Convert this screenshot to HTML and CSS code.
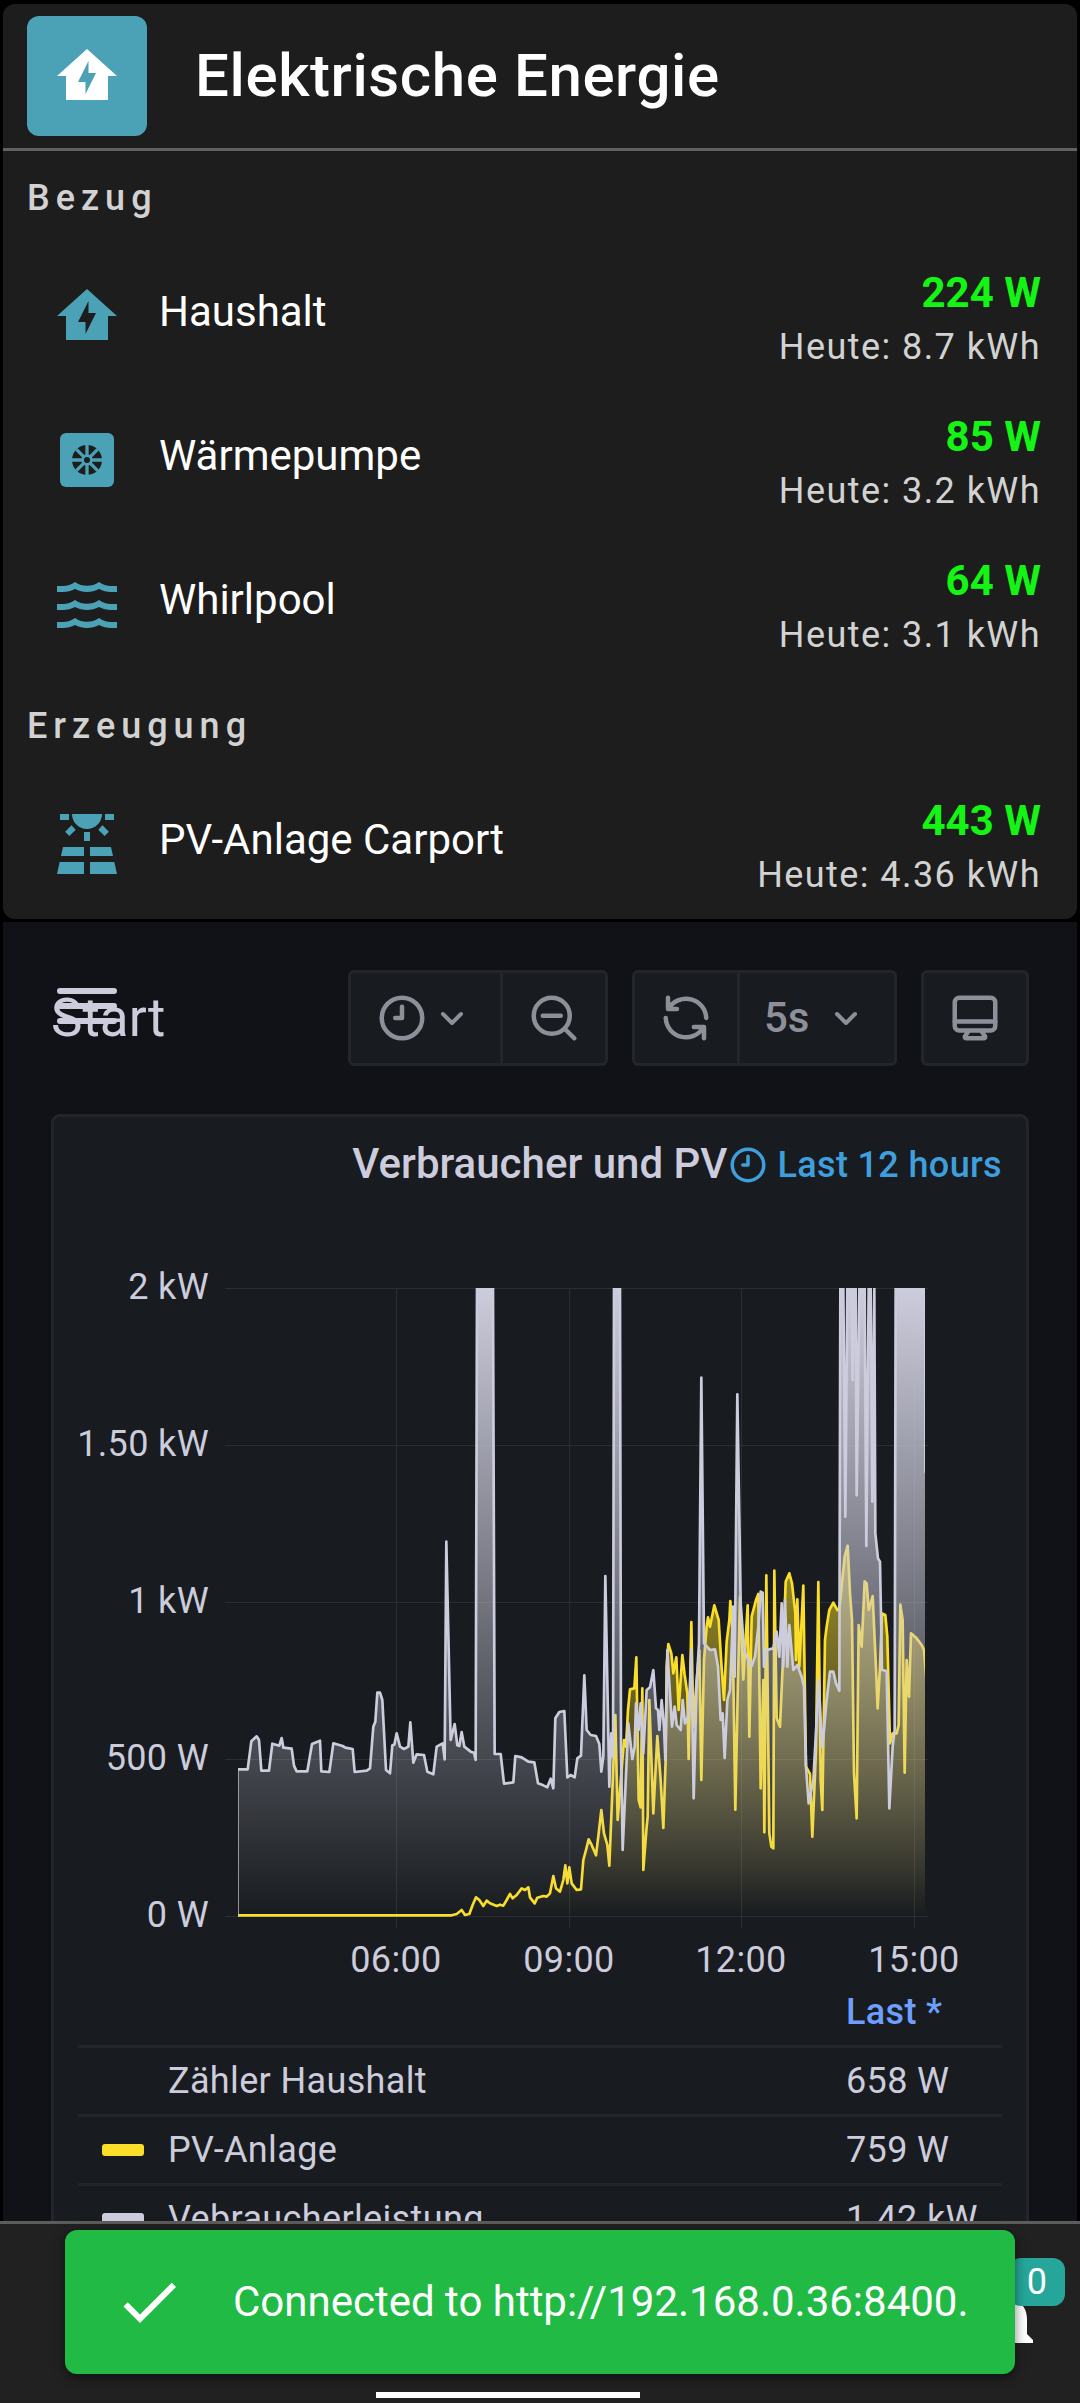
FILE: index.html
```html
<!DOCTYPE html>
<html lang="de">
<head>
<meta charset="utf-8">
<meta name="viewport" content="width=device-width, initial-scale=1">
<title>Elektrische Energie</title>
<link rel="stylesheet" href="styles.css">
</head>
<body>
<main class="content">
  <section class="card">
    <header class="card-header">
      <span class="card-tile">
        <svg class="icon" viewBox="0 0 24 24" aria-hidden="true"><path d="M12 3L2 12H5V20H19V12H22L12 3M11.5 18V14H9L12.5 7V11H15L11.5 18Z"/></svg>
      </span>
      <h1 class="card-title">Elektrische Energie</h1>
    </header>

    <div class="group">
      <h2 class="group-title">Bezug</h2>
      <ul class="rows">
        <li class="row">
          <svg class="icon row-icon" viewBox="0 0 24 24" aria-hidden="true"><path d="M12 3L2 12H5V20H19V12H22L12 3M11.5 18V14H9L12.5 7V11H15L11.5 18Z"/></svg>
          <span class="row-name">Haushalt</span>
          <span class="row-values"><strong class="row-now">224 W</strong><span class="row-today">Heute: 8.7 kWh</span></span>
        </li>
        <li class="row">
          <svg class="icon row-icon" viewBox="0 0 24 24" aria-hidden="true">
            <rect x="3" y="3" width="18" height="18" rx="2"/>
            <circle class="fan-dark" cx="12" cy="12" r="5"/>
            <path class="fan-spokes" d="M12 7v10M7 12h10M8.46 8.46l7.08 7.08M15.54 8.46l-7.08 7.08"/>
            <circle cx="12" cy="12" r="1.9"/>
            <circle class="fan-dark" cx="12" cy="12" r="1"/>
          </svg>
          <span class="row-name">Wärmepumpe</span>
          <span class="row-values"><strong class="row-now">85 W</strong><span class="row-today">Heute: 3.2 kWh</span></span>
        </li>
        <li class="row">
          <svg class="icon row-icon" viewBox="0 0 24 24" aria-hidden="true"><path d="M20,12H22V14H20C18.62,14 17.26,13.65 16,13C13.5,14.3 10.5,14.3 8,13C6.74,13.65 5.37,14 4,14H2V12H4C5.39,12 6.78,11.53 8,10.67C10.44,12.38 13.56,12.38 16,10.67C17.22,11.53 18.61,12 20,12M20,6H22V8H20C18.62,8 17.26,7.65 16,7C13.5,8.3 10.5,8.3 8,7C6.74,7.65 5.37,8 4,8H2V6H4C5.39,6 6.78,5.53 8,4.67C10.44,6.38 13.56,6.38 16,4.67C17.22,5.53 18.61,6 20,6M20,18H22V20H20C18.62,20 17.26,19.65 16,19C13.5,20.3 10.5,20.3 8,19C6.74,19.65 5.37,20 4,20H2V18H4C5.39,18 6.78,17.53 8,16.67C10.44,18.38 13.56,18.38 16,16.67C17.22,17.53 18.61,18 20,18Z"/></svg>
          <span class="row-name">Whirlpool</span>
          <span class="row-values"><strong class="row-now">64 W</strong><span class="row-today">Heute: 3.1 kWh</span></span>
        </li>
      </ul>
    </div>

    <div class="group">
      <h2 class="group-title">Erzeugung</h2>
      <ul class="rows">
        <li class="row">
          <svg class="icon row-icon" viewBox="0 0 24 24" aria-hidden="true"><path d="M3.33 16H11V13H4L3.33 16M13 16H20.67L20 13H13V16M21.11 18H13V22H22L21.11 18M2 22H11V18H2.89L2 22M11 8H13V11H11V8M15.76 7.21L17.18 5.79L19.3 7.91L17.89 9.33L15.76 7.21M4.71 7.91L6.83 5.79L8.24 7.21L6.12 9.33L4.71 7.91M3 2H6V4H3V2M18 2H21V4H18V2M12 7C14.76 7 17 4.76 17 2H7C7 4.76 9.24 7 12 7Z"/></svg>
          <span class="row-name">PV-Anlage Carport</span>
          <span class="row-values"><strong class="row-now">443 W</strong><span class="row-today">Heute: 4.36 kWh</span></span>
        </li>
      </ul>
    </div>
  </section>

  <section class="dashboard">
    <div class="toolbar">
      <div class="toolbar-title">
        <h2 class="dashboard-name">Start</h2>
        <button class="menu-button" type="button" aria-label="Menü">
          <svg viewBox="0 0 60 36" aria-hidden="true"><path d="M3 3h54M3 18h54M3 33h54"/></svg>
        </button>
      </div>
      <div class="button-group">
        <button class="tool-button time-button" type="button" aria-label="Zeitraum">
          <svg class="tool-icon" viewBox="0 0 24 24" aria-hidden="true"><circle cx="12" cy="12" r="9"/><path d="M12 7v5H9"/></svg>
          <svg class="chevron" viewBox="0 0 30 54" aria-hidden="true"><path d="M6 23l9 9 9-9"/></svg>
        </button>
        <button class="tool-button" type="button" aria-label="Verkleinern">
          <svg class="tool-icon" viewBox="0 0 24 24" aria-hidden="true"><circle cx="11" cy="11" r="8"/><path d="M7 11h8M17 17l4 4"/></svg>
        </button>
      </div>
      <div class="button-group">
        <button class="tool-button" type="button" aria-label="Aktualisieren">
          <svg class="tool-icon" viewBox="0 0 24 24" aria-hidden="true"><path d="M4 3v5h4M4.4 7.6A9 9 0 0 1 21 12M20 21v-5h-4.500M19.600 16.400A9 9 0 0 1 3 12"/></svg>
        </button>
        <div class="interval">
          <select class="interval-select" aria-label="Intervall"><option>5s</option><option>10s</option><option>30s</option></select>
          <svg class="chevron" viewBox="0 0 30 54" aria-hidden="true"><path d="M6 23l9 9 9-9"/></svg>
        </div>
      </div>
      <div class="button-group">
        <button class="tool-button" type="button" aria-label="Ansicht">
          <svg class="tool-icon" viewBox="0 0 24 24" aria-hidden="true"><rect x="3" y="3" width="18" height="14.500" rx="2"/><path d="M3 13.500h18M9 18l-1.500 2.200q-.2 .8 .7 .8h7.600q.9 0 .7-.8L15 18"/></svg>
        </button>
      </div>
    </div>

    <article class="panel">
      <header class="panel-header">
        <h3 class="panel-title">Verbraucher und PV</h3>
        <a class="panel-range" href="#range">
          <svg class="range-icon" viewBox="0 0 24 24" aria-hidden="true"><circle cx="12" cy="12" r="9"/><path d="M12 7v5H9"/></svg>Last 12 hours
        </a>
      </header>

      <svg class="chart" viewBox="54 1213 972 770" role="img" aria-label="Verbraucher und PV">
        <defs>
          <linearGradient id="fill-load" gradientUnits="userSpaceOnUse" x1="0" y1="-935" x2="0" y2="949">
            <stop offset="0" stop-color="#ccccdc"/><stop offset="1" stop-color="#ccccdc" stop-opacity="0"/>
          </linearGradient>
          <linearGradient id="fill-pv" gradientUnits="userSpaceOnUse" x1="0" y1="-935" x2="0" y2="949">
            <stop offset="0" stop-color="#fade2a"/><stop offset="1" stop-color="#fade2a" stop-opacity="0"/>
          </linearGradient>
          <clipPath id="plot"><rect x="238" y="1288" width="687" height="629"/></clipPath>
        </defs>
        <path class="grid" d="M225 1288.500h703M225 1445.500h703M225 1602.500h703M225 1759.500h703M225 1916.500h703M396.500 1288v640M569.500 1288v640M741.500 1288v640M914.500 1288v640"/>
        <g clip-path="url(#plot)">
          <g class="series" transform="translate(200 1600) scale(.33333)">
            <path fill="url(#fill-pv)" stroke="#fade2a" d="M113 946L755 946 770 942 785 930 795 945 808 942 818 915 828 892 838 900 850 918 860 902 870 910 890 918 900 914 910 917 920 900 930 882 938 895 950 885 965 865 975 870 985 862 990 892 1004 910 1012 893 1030 888 1040 890 1050 880 1060 828 1068 865 1080 875 1090 840 1096 796 1102 850 1108 802 1115 850 1130 870 1143 868 1150 780 1158 750 1166 718 1175 735 1188 766 1196 700 1204 630 1212 700 1222 735 1228 797 1236 600 1246 345 1253 660 1272 420 1278 440 1284 330 1290 268 1303 265 1309 172 1316 600 1322 622 1327 265 1330 810 1340 680 1343 650 1348 300 1360 640 1372 408 1382 540 1390 684 1397 480 1400 200 1405 132 1414 160 1420 220 1429 172 1436 330 1447 165 1454 225 1462 280 1466 477 1474 66 1480 380 1490 240 1498 150 1504 540 1512 180 1520 80 1524 52 1530 80 1543 16 1556 60 1564 190 1572 300 1580 125 1588 60 1591 3 1598 100 1606 629 1614 240 1620 -10 1630 238 1643 16 1648 410 1655 50 1668 0 1675 -18 1682 565 1690 240 1693 697 1699 -74 1708 700 1714 740 1720 745 1723 -88 1730 355 1740 380 1748 200 1757 -55 1768 -80 1776 -50 1786 40 1788 180 1792 -2 1798 200 1810 -43 1818 500 1830 522 1837 710 1848 450 1855 -54 1862 540 1867 630 1875 120 1880 80 1888 30 1900 8 1912 30 1918 25 1921 0 1934 -130 1943 -163 1950 -20 1956 60 1962 520 1970 655 1976 75 1985 140 1994 -56 2000 -50 2006 30 2018 -12 2026 160 2033 325 2040 200 2046 40 2056 45 2062 110 2070 430 2078 400 2090 400 2096 375 2101 14 2108 60 2114 518 2120 180 2127 290 2133 100 2150 115 2165 135 2172 150 2179 235V960"/>
            <path fill="url(#fill-load)" stroke="#ccccdc" d="M112 960V508L143 508 154 424 170 409 177 420 184 512 207 512 217 431 238 437 245 414 250 443 275 446 282 497 290 514 322 514 336 432 360 422 364 514 388 516 400 430 428 438 436 443 458 447 464 516 500 512 510 505 520 380 526 365 532 278 540 278 547 300 558 510 570 520 577 436 583 434 590 400 600 440 612 447 625 440 631 367 640 488 650 463 672 465 682 515 700 523 710 440 728 430 734 478 739 -175 752 420 764 372 772 436 778 438 785 396 793 440 812 455 822 458 827 480 831 -935 879 -935 884 462 902 462 912 551 940 547 946 468 965 472 985 485 1003 487 1014 550 1030 556 1042 562 1052 536 1060 565 1066 355 1078 336 1093 333 1102 532 1112 525 1124 532 1132 475 1143 467 1153 226 1160 390 1172 405 1188 408 1198 432 1204 515 1210 470 1216 -72 1228 560 1234 400 1239 470 1242 -935 1260 -935 1263 440 1268 750 1285 370 1297 477 1304 440 1308 310 1316 390 1322 310 1330 460 1340 270 1350 262 1360 210 1368 325 1374 330 1378 390 1385 300 1392 380 1396 480 1402 150 1416 380 1424 320 1430 375 1442 390 1448 300 1455 370 1464 350 1470 260 1474 150 1481 595 1490 250 1497 130 1504 -667 1512 130 1530 150 1545 148 1554 200 1562 360 1568 340 1574 474 1582 300 1590 270 1600 20 1604 230 1612 -617 1622 10 1630 120 1636 160 1645 180 1655 198 1665 170 1675 80 1682 -25 1688 -22 1692 200 1700 150 1720 145 1730 95 1738 170 1745 10 1750 200 1755 0 1762 200 1768 75 1780 210 1792 195 1805 230 1812 260 1818 500 1826 610 1840 540 1850 360 1856 240 1866 440 1872 390 1880 300 1890 215 1900 215 1908 250 1918 272 1921 -935 1930 -935 1936 -250 1942 -935 1954 -935 1958 -660 1962 -935 1967 -935 1970 -314 1978 -935 1994 -935 1999 -162 2006 -935 2012 -935 2017 -295 2023 -935 2026 -200 2034 -125 2040 -115 2046 210 2060 213 2068 625 2078 440 2084 390 2087 -935 2176 -935 2176 -385 2180 -385V960"/>
          </g>
        </g>
        <g class="axis axis-y">
          <text x="209" y="1299">2 kW</text>
          <text x="209" y="1456">1.50 kW</text>
          <text x="209" y="1613">1 kW</text>
          <text x="209" y="1770">500 W</text>
          <text x="209" y="1927">0 W</text>
        </g>
        <g class="axis axis-x">
          <text x="396" y="1972">06:00</text>
          <text x="569" y="1972">09:00</text>
          <text x="741" y="1972">12:00</text>
          <text x="914" y="1972">15:00</text>
        </g>
      </svg>

      <table class="legend">
        <thead>
          <tr><th class="legend-key"></th><th></th><th class="legend-value" scope="col">Last *</th></tr>
        </thead>
        <tbody>
          <tr><td class="legend-key"><span class="swatch"></span></td><td>Zähler Haushalt</td><td>658 W</td></tr>
          <tr><td class="legend-key"><span class="swatch swatch-pv"></span></td><td>PV-Anlage</td><td>759 W</td></tr>
          <tr><td class="legend-key"><span class="swatch swatch-load"></span></td><td>Vebraucherleistung</td><td>1.42 kW</td></tr>
        </tbody>
      </table>
    </article>
  </section>
</main>

<footer class="bottom-bar">
  <button class="bell" type="button" aria-label="Benachrichtigungen">
    <svg class="icon" viewBox="0 0 24 24" aria-hidden="true"><path d="M12 22c1.100 0 2-.9 2-2h-4c0 1.100.89 2 2 2zm6-6v-5c0-3.070-1.640-5.640-4.500-6.320V4c0-.83-.67-1.500-1.500-1.500s-1.500.67-1.500 1.500v.68C7.630 5.360 6 7.920 6 11v5l-2 2v1h16v-1l-2-2z"/></svg>
    <span class="badge">0</span>
  </button>
  <div class="toast" role="status">
    <svg class="icon" viewBox="0 0 24 24" aria-hidden="true"><path d="M21,7L9,19L3.500,13.500L4.910,12.090L9,16.170L19.590,5.590L21,7Z"/></svg>
    <span>Connected to http://192.168.0.36:8400.</span>
  </div>
  <div class="home-indicator"></div>
</footer>
</body>
</html>
```
FILE: styles.css
```css
* { box-sizing: border-box; }

body {
  margin: 0;
  height: 100vh;
  display: flex;
  flex-direction: column;
  background: #000;
  color: #fff;
  font-family: Roboto, "Noto Sans", sans-serif;
  font-size: 42px;
  line-height: 48px;
}

h1, h2, h3, ul { margin: 0; padding: 0; }
h1, h2, h3 { font-weight: 500; }
ul { list-style: none; }
button, select { margin: 0; padding: 0; border: 0; background: none; color: inherit; font: inherit; }
svg { display: block; flex: none; }

.content {
  flex: 1;
  min-height: 0;
  overflow: hidden;
  padding: 4px 3px 0;
  display: flex;
  flex-direction: column;
  gap: 3px;
}

/* energy card */
.card { flex: none; background: #1d1d1d; border-radius: 12px; }
.card-header {
  display: flex;
  align-items: center;
  gap: 48px;
  padding: 12px 24px;
  border-bottom: 3px solid #616161;
}
.card-tile {
  display: grid;
  place-items: center;
  width: 120px;
  height: 120px;
  border-radius: 12px;
  background: #4ba2b6;
}
.card-title { font-size: 60px; line-height: 72px; letter-spacing: 0.01em; }
.icon { width: 72px; height: 72px; fill: currentColor; }

.group { padding-bottom: 3px; }
.group-title {
  padding: 26px 24px 25px;
  color: #d2d2d2;
  font-size: 36px;
  line-height: 42px;
  letter-spacing: 6px;
}
.row {
  display: flex;
  align-items: flex-start;
  gap: 36px;
  padding: 25px 36px 11px 48px;
}
.row-icon { margin-top: 11px; color: #4ba2b6; }
.row-name { flex: 1; margin-top: 19px; }
.row-values { display: flex; flex-direction: column; align-items: flex-end; }
.row-now { color: #14f514; font-weight: 700; }
.row-today { color: #d2d2d2; font-size: 36px; line-height: 60px; letter-spacing: 0.04em; }
.fan-dark { fill: #1d1d1d; }
.fan-spokes { stroke: currentColor; stroke-width: 1.1; }

/* dashboard */
.dashboard { flex: none; padding: 48px; background: #111217; color: #ccccdc; }
.toolbar { display: flex; align-items: center; gap: 24px; margin-bottom: 48px; }
.toolbar-title { position: relative; flex: 1; }
.dashboard-name { font-size: 53px; line-height: 66px; font-weight: 400; }
.menu-button { position: absolute; left: 6px; top: 3px; }
.menu-button svg { width: 60px; height: 36px; stroke: #ccccdc; stroke-width: 6; stroke-linecap: round; }

.button-group {
  display: flex;
  height: 96px;
  border: 3px solid #22252b;
  border-radius: 6px;
  background: #181b1f;
  color: #8e9099;
}
.button-group > * + * { border-left: 3px solid #22252b; }
.tool-button { display: flex; align-items: center; gap: 8px; padding: 0 24px; }
.time-button { padding-right: 33px; }
.tool-icon { width: 54px; height: 54px; }
.chevron { width: 30px; height: 54px; }
.tool-icon, .range-icon { fill: none; stroke: currentColor; stroke-width: 2; stroke-linecap: round; stroke-linejoin: round; }
.chevron { fill: none; stroke: currentColor; stroke-width: 4; stroke-linecap: round; stroke-linejoin: round; }
.interval { position: relative; display: flex; align-items: center; width: 157px; }
.interval-select { appearance: none; width: 100%; height: 100%; padding-left: 24px; font-weight: 500; }
.interval .chevron { position: absolute; right: 33px; pointer-events: none; }

.panel { border: 3px solid #22252b; border-radius: 9px; background: #181b1f; padding-bottom: 48px; }
.panel-header {
  display: grid;
  grid-template-columns: 1fr auto 1fr;
  padding: 23px 24px 25px;
}
.panel-title { grid-column: 2; font-size: 42px; }
.panel-range {
  display: flex;
  align-items: center;
  justify-content: flex-end;
  gap: 8px;
  padding-top: 2px;
  height: 48px;
  color: #3f9fdc;
  font-size: 36px;
  font-weight: 500;
  letter-spacing: 0.01em;
  text-decoration: none;
  white-space: nowrap;
}
.range-icon { width: 42px; height: 42px; }

.chart { width: 100%; height: auto; }
.grid { fill: none; stroke: #2b2e32; stroke-width: 1; }
.series { stroke-width: 8; stroke-linejoin: round; }
.axis { fill: #ccccdc; font-size: 36px; letter-spacing: 0.01em; }
.axis-y { text-anchor: end; }
.axis-x { text-anchor: middle; }

.legend {
  width: calc(100% - 48px);
  margin: 0 24px;
  border-spacing: 0;
  font-size: 36px;
  line-height: 42px;
  letter-spacing: 0.01em;
}
.legend th { padding: 8px 0 12px; color: #6e9fff; font-weight: 500; text-align: left; }
.legend td { padding: 12px 0; border-top: 3px solid #22252b; }
.legend .legend-key { width: 90px; padding-left: 24px; vertical-align: middle; }
.legend-value { width: 156px; }
.swatch { display: block; width: 42px; height: 12px; border-radius: 3px; }
.swatch-pv { background: #fade2a; }
.swatch-load { background: #ccccdc; }

/* bottom bar */
.bottom-bar {
  position: relative;
  flex: none;
  display: flex;
  justify-content: flex-end;
  height: 182px;
  padding: 62px 35px 0;
  border-top: 3px solid #5c5c5c;
  background: #212121;
}
.bell { position: relative; height: 72px; }
.badge {
  position: absolute;
  right: -20px;
  top: -28px;
  padding: 0 18px;
  border-radius: 12px;
  background: #26a69a;
  font-size: 36px;
  line-height: 48px;
}
.toast {
  position: absolute;
  left: 65px;
  right: 65px;
  top: 6px;
  display: flex;
  align-items: center;
  gap: 48px;
  height: 144px;
  padding: 0 48px;
  border-radius: 12px;
  background: #21ba45;
  box-shadow: 0 3px 12px rgba(0, 0, 0, .5);
  white-space: nowrap;
}
.home-indicator { position: absolute; left: 376px; bottom: 5px; width: 264px; height: 6px; background: #fff; }
```
